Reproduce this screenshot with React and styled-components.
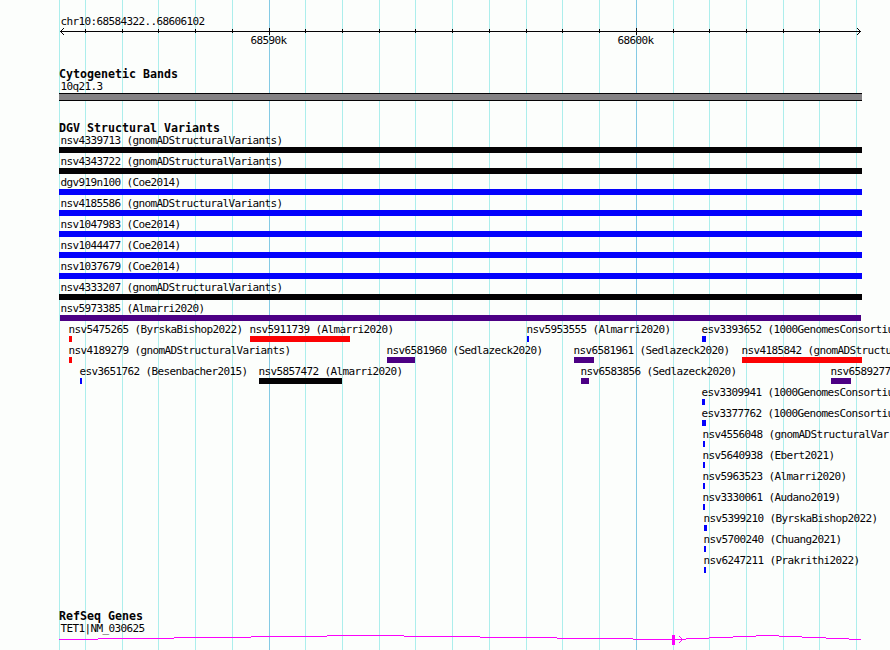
import styled, { createGlobalStyle, css } from "styled-components";

const colors = {
  page: "#fcfefc",
  ink: "#040204",
  grid: "#aceeec",
  gridMajor: "#84cae4",
  band: "#848284",
  black: "#040204",
  blue: "#0402fc",
  red: "#fc0204",
  indigo: "#4c0084",
  gene: "#fc02fc",
};

const minorLines = [59, 85, 122, 158, 195, 232, 305, 342, 379, 415, 452, 489, 526, 562, 599, 673, 709, 746, 783, 819, 856];
const majorLines = [
  { x: 269, label: "68590k" },
  { x: 636, label: "68600k" },
];

const line = (x, color) => `linear-gradient(${color}, ${color}) ${x}px 0 / 1px 100% no-repeat`;

const gridBackground = [
  ...minorLines.map((x) => line(x, colors.grid)),
  ...majorLines.map(({ x }) => line(x, colors.gridMajor)),
].join(", ");

const GlobalStyle = createGlobalStyle`
  body {
    margin: 0;
    background: ${colors.page};
    overflow: hidden;
  }
`;

const monoText = css`
  font-family: "DejaVu Sans Mono", "Liberation Mono", monospace;
  font-size: 11px;
  line-height: 13px;
  color: ${colors.ink};
  white-space: pre;
`;

const Browser = styled.main`
  width: 890px;
  height: 650px;
  box-sizing: border-box;
  padding-top: 15px;
  overflow: hidden;
  background: ${gridBackground};
`;

const Ruler = styled.header`
  height: 53px;
`;

const Label = styled.div`
  ${monoText}
  height: 13px;
  letter-spacing: -0.622px;
  margin-left: ${({ $indent = 0 }) => $indent}px;
`;

const Axis = styled.svg`
  display: block;
  width: 890px;
  height: 7px;
  shape-rendering: crispEdges;
`;

const TickLabels = styled.div`
  display: grid;
  margin-top: -1px;
`;

const TickLabel = styled(Label)`
  grid-area: 1 / 1;
  margin-left: ${({ $x }) => $x - 18.5}px;
`;

const Track = styled.section`
  margin-bottom: ${({ $gap = 0 }) => $gap}px;
`;

const TrackTitle = styled.h2`
  ${monoText}
  height: 12px;
  margin: 0 0 0 59px;
  font-size: 11.63px;
  font-weight: bold;
`;

const Band = styled.div`
  box-sizing: border-box;
  width: 803px;
  height: 8px;
  margin-left: 59px;
  border: solid ${colors.ink};
  border-width: 1px 0;
  background: ${colors.band};
`;

const Lane = styled.div`
  display: grid;
  grid-template-columns: 890px;
  height: 21px;
`;

const FeatureBox = styled.div`
  grid-area: 1 / 1;
  margin-left: ${({ $start }) => $start}px;
`;

const Bar = styled.div`
  width: ${({ $width }) => $width}px;
  height: 6px;
  background: ${({ $color }) => colors[$color]};
`;

const GeneModel = styled.svg`
  display: block;
  width: 890px;
  height: 15px;
  fill: ${colors.gene};
  shape-rendering: crispEdges;
`;

// [name, start, end, color]
const lanes = [
  [["nsv4339713 (gnomADStructuralVariants)", 59, 862, "black"]],
  [["nsv4343722 (gnomADStructuralVariants)", 59, 862, "black"]],
  [["dgv919n100 (Coe2014)", 59, 862, "blue"]],
  [["nsv4185586 (gnomADStructuralVariants)", 59, 862, "blue"]],
  [["nsv1047983 (Coe2014)", 59, 862, "blue"]],
  [["nsv1044477 (Coe2014)", 59, 862, "blue"]],
  [["nsv1037679 (Coe2014)", 59, 862, "blue"]],
  [["nsv4333207 (gnomADStructuralVariants)", 59, 862, "black"]],
  [["nsv5973385 (Almarri2020)", 60, 861, "indigo"]],
  [
    ["nsv5475265 (ByrskaBishop2022)", 69, 72, "red"],
    ["nsv5911739 (Almarri2020)", 250, 350, "red"],
    ["nsv5953555 (Almarri2020)", 527, 529, "blue"],
    ["esv3393652 (1000GenomesConsortiu", 702, 706, "blue"],
  ],
  [
    ["nsv4189279 (gnomADStructuralVariants)", 69, 72, "red"],
    ["nsv6581960 (Sedlazeck2020)", 387, 415, "indigo"],
    ["nsv6581961 (Sedlazeck2020)", 574, 594, "indigo"],
    ["nsv4185842 (gnomADStructu", 742, 862, "red"],
  ],
  [
    ["esv3651762 (Besenbacher2015)", 80, 82, "blue"],
    ["nsv5857472 (Almarri2020)", 259, 342, "black"],
    ["nsv6583856 (Sedlazeck2020)", 581, 589, "indigo"],
    ["nsv6589277", 831, 851, "indigo"],
  ],
  [["esv3309941 (1000GenomesConsortiu", 702, 705, "blue"]],
  [["esv3377762 (1000GenomesConsortiu", 702, 706, "blue"]],
  [["nsv4556048 (gnomADStructuralVar", 703, 705, "blue"]],
  [["nsv5640938 (Ebert2021)", 703, 705, "blue"]],
  [["nsv5963523 (Almarri2020)", 703, 705, "blue"]],
  [["nsv3330061 (Audano2019)", 703, 705, "blue"]],
  [["nsv5399210 (ByrskaBishop2022)", 704, 707, "blue"]],
  [["nsv5700240 (Chuang2021)", 704, 706, "blue"]],
  [["nsv6247211 (Prakrithi2022)", 704, 706, "blue"]],
];

// Intron steps: [start, end, y]
const introns = [
  [59, 98, 4],
  [98, 174, 3],
  [174, 251, 2],
  [251, 327, 1],
  [327, 404, 0],
  [404, 480, 1],
  [480, 557, 2],
  [557, 633, 3],
  [633, 686, 4],
  [686, 709, 3],
  [709, 733, 2],
  [733, 756, 1],
  [756, 779, 0],
  [779, 802, 1],
  [802, 826, 2],
  [826, 849, 3],
  [849, 861, 4],
];

const arrowPixels = [
  [679, 1],
  [680, 2],
  [681, 3],
  [682, 4],
  [681, 5],
  [680, 6],
  [679, 7],
];

function Feature({ name, start, end, color }) {
  return (
    <FeatureBox $start={start}>
      <Label $indent={start <= 60 ? 60.5 - start : -0.5}>{name}</Label>
      <Bar $width={end - start} $color={color} />
    </FeatureBox>
  );
}

function RulerAxis() {
  return (
    <Axis viewBox="0 0 890 7" fill={colors.ink}>
      <rect x="60" y="3" width="801" height="1" />
      {minorLines.slice(1, -1).map((x) => (
        <rect key={x} x={x} y="1" width="1" height="4" />
      ))}
      {majorLines.map(({ x }) => (
        <rect key={x} x={x} y="0" width="1" height="7" />
      ))}
      {[1, 2, 3].map((n) => (
        <g key={n}>
          <rect x={60 + n} y={3 - n} width="1" height="1" />
          <rect x={60 + n} y={3 + n} width="1" height="1" />
          <rect x={860 - n} y={3 - n} width="1" height="1" />
          <rect x={860 - n} y={3 + n} width="1" height="1" />
        </g>
      ))}
    </Axis>
  );
}

export default function App() {
  return (
    <>
      <GlobalStyle />
      <Browser>
        <Ruler>
          <Label $indent={60.5}>chr10:68584322..68606102</Label>
          <RulerAxis />
          <TickLabels>
            {majorLines.map(({ x, label }) => (
              <TickLabel key={x} $x={x}>
                {label}
              </TickLabel>
            ))}
          </TickLabels>
        </Ruler>

        <Track $gap={21}>
          <TrackTitle>Cytogenetic Bands</TrackTitle>
          <Label $indent={60.5}>10q21.3</Label>
          <Band />
        </Track>

        <Track $gap={35}>
          <TrackTitle>DGV Structural Variants</TrackTitle>
          {lanes.map((features) => (
            <Lane key={features[0][0]}>
              {features.map(([name, start, end, color]) => (
                <Feature key={name} name={name} start={start} end={end} color={color} />
              ))}
            </Lane>
          ))}
        </Track>

        <Track>
          <TrackTitle>RefSeq Genes</TrackTitle>
          <Label $indent={60.5}>TET1|NM_030625</Label>
          <GeneModel viewBox="0 0 890 15">
            {introns.map(([start, end, y]) => (
              <rect key={start} x={start} y={y} width={end - start} height="1" />
            ))}
            <rect x="672" y="0" width="3" height="10" />
            {arrowPixels.map(([x, y]) => (
              <rect key={y} x={x} y={y} width="1" height="1" />
            ))}
          </GeneModel>
        </Track>
      </Browser>
    </>
  );
}
